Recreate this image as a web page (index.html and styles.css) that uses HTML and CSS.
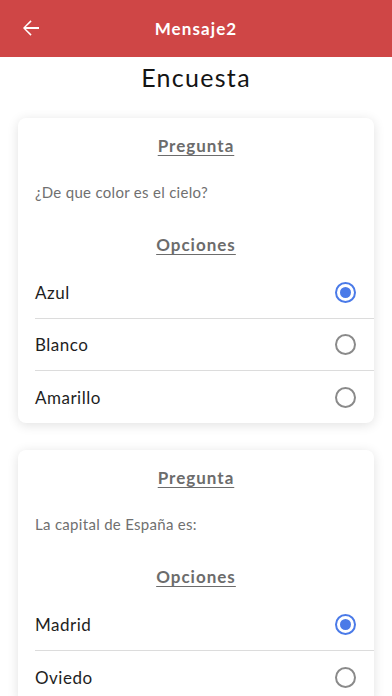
FILE: index.html
```html
<!DOCTYPE html>
<html lang="es">
<head>
<meta charset="utf-8">
<link rel="stylesheet" href="styles.css">
</head>
<body>
<header class="appbar">
  <span class="back">
    <svg width="24" height="24" viewBox="0 0 24 24"><path d="M20 11.1H6.9l5.7-5.7-1.1-1.1L4 12l7.5 7.7 1.1-1.1-5.7-5.7H20z" fill="#fff"/></svg>
  </span>
  <h1 class="appbar-title">Mensaje2</h1>
</header>
<main class="content">
  <h2 class="page-title">Encuesta</h2>
  <section class="card">
    <div class="label">Pregunta</div>
    <div class="question">¿De que color es el cielo?</div>
    <div class="label label-options">Opciones</div>
    <ul class="options">
      <li class="option"><span>Azul</span><span class="radio checked"></span></li>
      <li class="option"><span>Blanco</span><span class="radio"></span></li>
      <li class="option"><span>Amarillo</span><span class="radio"></span></li>
    </ul>
  </section>
  <section class="card">
    <div class="label">Pregunta</div>
    <div class="question">La capital de España es:</div>
    <div class="label label-options">Opciones</div>
    <ul class="options">
      <li class="option"><span>Madrid</span><span class="radio checked"></span></li>
      <li class="option"><span>Oviedo</span><span class="radio"></span></li>
    </ul>
  </section>
</main>
</body>
</html>
```
FILE: styles.css
```css
* { box-sizing: border-box; }
html, body { margin: 0; padding: 0; }
body {
  width: 392px;
  height: 696px;
  overflow: hidden;
  background: #fff;
  font-family: Lato, "Noto Sans", sans-serif;
  color: #1e1e1e;
}
.appbar {
  position: relative;
  height: 57px;
  background: #cf4646;
  display: flex;
  align-items: center;
  justify-content: center;
}
.back {
  position: absolute;
  left: 19px;
  top: 16px;
  width: 24px;
  height: 24px;
  display: flex;
}
.appbar-title {
  margin: 0;
  color: #fff;
  font-size: 17px;
  font-weight: 700;
  letter-spacing: 1.1px;
  line-height: 24px;
}
.content {
  padding: 4px 18px 0;
  display: flex;
  flex-direction: column;
  gap: 27px;
}
.page-title {
  margin: 0 0 -2px;
  text-align: center;
  font-size: 25px;
  font-weight: 400;
  line-height: 32px;
  color: #141414;
  letter-spacing: 1.3px;
}
.card {
  background: #fff;
  border-radius: 8px;
  box-shadow: 0 2px 12px rgba(0,0,0,0.12);
  padding-top: 16px;
}
.label {
  text-align: center;
  font-size: 17px;
  font-weight: 700;
  line-height: 24px;
  color: #6c6c6c;
  text-decoration: underline;
  text-underline-offset: 3px;
  letter-spacing: 1px;
}
.question {
  margin: 24px 0 0 17px;
  font-size: 15px;
  line-height: 20px;
  color: #707070;
  letter-spacing: 0.3px;
}
.label-options { margin-top: 31px; }
.options {
  list-style: none;
  margin: 10px 0 0 17px;
  padding: 0;
}
.option {
  height: 52px;
  display: flex;
  align-items: center;
  justify-content: space-between;
  padding-right: 18px;
  border-bottom: 1px solid #dcdcdc;
  font-size: 17px;
  color: #1e1e1e;
  letter-spacing: 0.5px;
}
.option:last-child { border-bottom: none; }
.radio {
  width: 21px;
  height: 21px;
  border-radius: 50%;
  border: 2px solid #8a8a8a;
  display: flex;
  align-items: center;
  justify-content: center;
}
.radio.checked { border-color: #4a7ae8; }
.radio.checked::after {
  content: "";
  width: 11px;
  height: 11px;
  border-radius: 50%;
  background: #4a7ae8;
}
```
